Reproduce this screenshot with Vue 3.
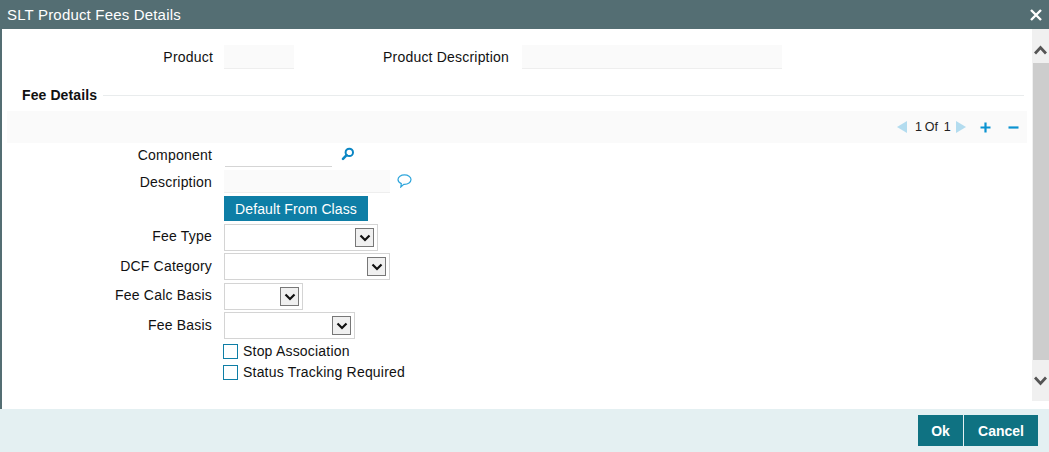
<template>
  <div class="dialog">
    <header class="titlebar">
      <span class="title">SLT Product Fees Details</span>
      <svg class="close" width="12" height="12" viewBox="0 0 12 12">
        <path d="M1 1 L11 11 M11 1 L1 11" stroke="#fff" stroke-width="2.4" fill="none" />
      </svg>
    </header>

    <div class="middle">
      <main class="content">
        <div class="product-row">
          <label class="lbl lbl-product">Product</label>
          <div class="ro ro-product"></div>
          <label class="lbl lbl-desc">Product Description</label>
          <div class="ro ro-desc"></div>
        </div>

        <div class="section-head">
          <span class="section-title">Fee Details</span>
          <span class="section-line"></span>
        </div>

        <div class="pager">
          <svg width="11" height="14" viewBox="0 0 11 14"><path d="M11 1 V13 L1 7 Z" fill="#b3dcef" /></svg>
          <span class="pager-text">1 Of&nbsp; 1</span>
          <svg width="11" height="14" viewBox="0 0 11 14"><path d="M0 1 V13 L10 7 Z" fill="#b3dcef" /></svg>
          <svg class="plus" width="11" height="11" viewBox="0 0 11 11"><path d="M5.5 0.5 V10.5 M0.5 5.5 H10.5" stroke="#0b93d1" stroke-width="2.2" /></svg>
          <svg class="minus" width="11" height="11" viewBox="0 0 11 11"><path d="M0.5 5.5 H10.5" stroke="#0b93d1" stroke-width="2.2" /></svg>
        </div>

        <div class="form">
          <div class="row row-component">
            <label class="lbl">Component</label>
            <div class="text-input"></div>
            <svg class="search" width="14" height="14" viewBox="0 0 14 14">
              <circle cx="8.3" cy="5.4" r="3.7" fill="none" stroke="#0b86c4" stroke-width="2" />
              <path d="M5.6 8.2 L2 11.8" stroke="#0b86c4" stroke-width="2.6" stroke-linecap="round" />
            </svg>
          </div>
          <div class="row row-description">
            <label class="lbl">Description</label>
            <div class="ro ro-description"></div>
            <svg class="bubble" width="15" height="14" viewBox="0 0 15 14">
              <path d="M7.5 0.8 C11 0.8 14 2.8 14 5.6 C14 8.4 11 10.3 7.5 10.3 L6.8 10.3 L3.8 13 L4.3 9.6 C2.3 8.8 1 7.3 1 5.6 C1 2.8 4 0.8 7.5 0.8 Z" fill="#fff" stroke="#2fa6dc" stroke-width="1.2" />
            </svg>
          </div>
          <div class="row row-button">
            <button class="default-btn" type="button">Default From Class</button>
          </div>
          <div v-for="sel in selects" :key="sel.label" class="row row-select">
            <label class="lbl">{{ sel.label }}</label>
            <div class="select" :style="{ width: sel.width + 'px' }">
              <span class="select-arrow">
                <svg width="12" height="8" viewBox="0 0 12 8"><path d="M1.5 1.5 L6 6 L10.5 1.5" stroke="#111" stroke-width="2.2" fill="none" /></svg>
              </span>
            </div>
          </div>
          <div class="row row-check">
            <span class="check"></span>
            <span class="check-text">Stop Association</span>
          </div>
          <div class="row row-check">
            <span class="check"></span>
            <span class="check-text">Status Tracking Required</span>
          </div>
        </div>
      </main>

      <aside class="scrollbar">
        <div class="scroll-btn btn-up">
          <svg width="13" height="10" viewBox="0 0 13 10"><path d="M1 8.5 L6.5 2.5 L12 8.5" stroke="#555" stroke-width="2.8" fill="none" /></svg>
        </div>
        <div class="scroll-track"></div>
        <div class="scroll-btn btn-down">
          <svg width="13" height="10" viewBox="0 0 13 10"><path d="M1 1.5 L6.5 7.5 L12 1.5" stroke="#555" stroke-width="2.8" fill="none" /></svg>
        </div>
      </aside>
    </div>

    <footer class="footer">
      <button class="foot-btn btn-ok" type="button">Ok</button>
      <button class="foot-btn btn-cancel" type="button">Cancel</button>
    </footer>
  </div>
</template>

<script setup>
const selects = [
  { label: 'Fee Type', width: 154 },
  { label: 'DCF Category', width: 166 },
  { label: 'Fee Calc Basis', width: 79 },
  { label: 'Fee Basis', width: 131 }
]
</script>

<style>
html, body {
  margin: 0;
  background: #fff;
}
</style>

<style scoped>
.dialog {
  width: 1049px;
  height: 452px;
  display: flex;
  flex-direction: column;
  overflow: hidden;
  font-family: "Liberation Sans", Arial, sans-serif;
  font-size: 14px;
  letter-spacing: 0.2px;
  color: #111;
  background: #fff;
}
.titlebar {
  height: 29px;
  flex: none;
  display: flex;
  align-items: center;
  justify-content: space-between;
  padding: 0 7px 1px 7px;
  box-sizing: border-box;
  background: #546e73;
  color: #fff;
}
.title {
  font-size: 15px;
  letter-spacing: 0.18px;
}
.close {
  margin-top: 1px;
}
.middle {
  flex: 1;
  display: flex;
  min-height: 0;
  border-left: 2px solid #546e73;
}
.content {
  flex: 1;
  min-width: 0;
}
.lbl {
  text-align: right;
  display: block;
}
.ro {
  background: #fafafa;
  border-bottom: 1px solid #eeeeee;
  box-sizing: border-box;
}
.product-row {
  display: flex;
  align-items: center;
  height: 24px;
  margin-top: 16px;
}
.lbl-product {
  width: 211px;
}
.ro-product {
  width: 70px;
  height: 24px;
  margin-left: 11px;
}
.lbl-desc {
  width: 215px;
}
.ro-desc {
  width: 260px;
  height: 24px;
  margin-left: 13px;
}
.section-head {
  display: flex;
  align-items: center;
  height: 20px;
  margin-top: 16px;
  padding-left: 20px;
  margin-right: 8px;
}
.section-title {
  font-weight: bold;
  margin-right: 6px;
  letter-spacing: 0.1px;
}
.section-line {
  flex: 1;
  height: 1px;
  background: #e9eced;
}
.pager {
  height: 32px;
  margin: 6px 5px 0 5px;
  background: #fafafa;
  display: flex;
  align-items: center;
  justify-content: flex-end;
  padding-right: 8px;
}
.pager-text {
  width: 36px;
  margin: 0 5px 0 8px;
  color: #222;
  font-size: 12.5px;
  letter-spacing: 0;
  word-spacing: -0.6px;
  white-space: nowrap;
}
.plus {
  margin-left: 13px;
  margin-top: 1px;
}
.minus {
  margin-left: 17px;
  margin-top: 1px;
}
.row {
  display: flex;
  align-items: center;
}
.row > .lbl {
  width: 210px;
  margin-right: 12px;
}
.row-component {
  height: 24px;
}
.text-input {
  width: 107px;
  height: 23px;
  margin-left: 1px;
  box-sizing: border-box;
  border-bottom: 1px solid #d5d5d5;
}
.search {
  margin-left: 9px;
  margin-top: -2px;
}
.row-description {
  height: 24px;
  margin-top: 3px;
}
.ro-description {
  width: 166px;
  height: 23px;
  margin-bottom: 1px;
}
.bubble {
  margin-left: 7px;
  margin-top: -2px;
}
.row-button {
  height: 25px;
  margin-top: 2px;
  padding-left: 222px;
}
.default-btn {
  width: 144px;
  height: 25px;
  padding: 0;
  border: 0;
  background: #0e7ea6;
  color: #fff;
  font: inherit;
  letter-spacing: 0.12px;
}
.row-select {
  height: 27px;
  margin-top: 2px;
}
.row-button + .row-select {
  margin-top: 3px;
}
.row-select:nth-child(6) {
  margin-top: 3px;
}
.row-select > .lbl {
  margin-top: -3px;
}
.row-select:nth-child(5) > .lbl {
  margin-top: -1px;
}
.row-select:nth-child(7) > .lbl {
  margin-top: -2px;
}
.select {
  height: 27px;
  box-sizing: border-box;
  border: 1px solid #d4d4d4;
  background: #fff;
  display: flex;
  align-items: center;
  justify-content: flex-end;
  padding-right: 3px;
}
.select-arrow {
  width: 19px;
  height: 19px;
  box-sizing: border-box;
  border: 1px solid #777;
  background: #f0f0f0;
  display: flex;
  align-items: center;
  justify-content: center;
}
.row-check {
  height: 16px;
  padding-left: 221px;
  margin-top: 5px;
  align-items: flex-start;
  line-height: 14px;
}
.check {
  width: 15px;
  height: 15px;
  box-sizing: border-box;
  border: 1px solid #0e7ea6;
  background: #fff;
  flex: none;
}
.check-text {
  margin-left: 5px;
  margin-top: 0;
}
.scrollbar {
  width: 17px;
  flex: none;
  display: flex;
  flex-direction: column;
  height: 372px;
  background: #f0f0f0;
}
.scroll-btn {
  height: 34px;
  flex: none;
  display: flex;
  align-items: center;
  justify-content: center;
  background: #f0f0f0;
}
.btn-up {
  box-sizing: border-box;
  padding-top: 8px;
}
.btn-down {
  height: 41px;
}
.scroll-track {
  flex: 1;
  margin-left: 1px;
  background: #cdcdcd;
}
.footer {
  height: 43px;
  flex: none;
  display: flex;
  justify-content: flex-end;
  align-items: flex-start;
  gap: 1px;
  padding: 6px 11px 0 0;
  box-sizing: border-box;
  background: #e4f0f2;
}
.foot-btn {
  height: 31px;
  padding: 0;
  border: 0;
  background: #0f7282;
  color: #fff;
  font: inherit;
  font-weight: bold;
}
.btn-ok {
  width: 45px;
}
.btn-cancel {
  width: 74px;
}
</style>
